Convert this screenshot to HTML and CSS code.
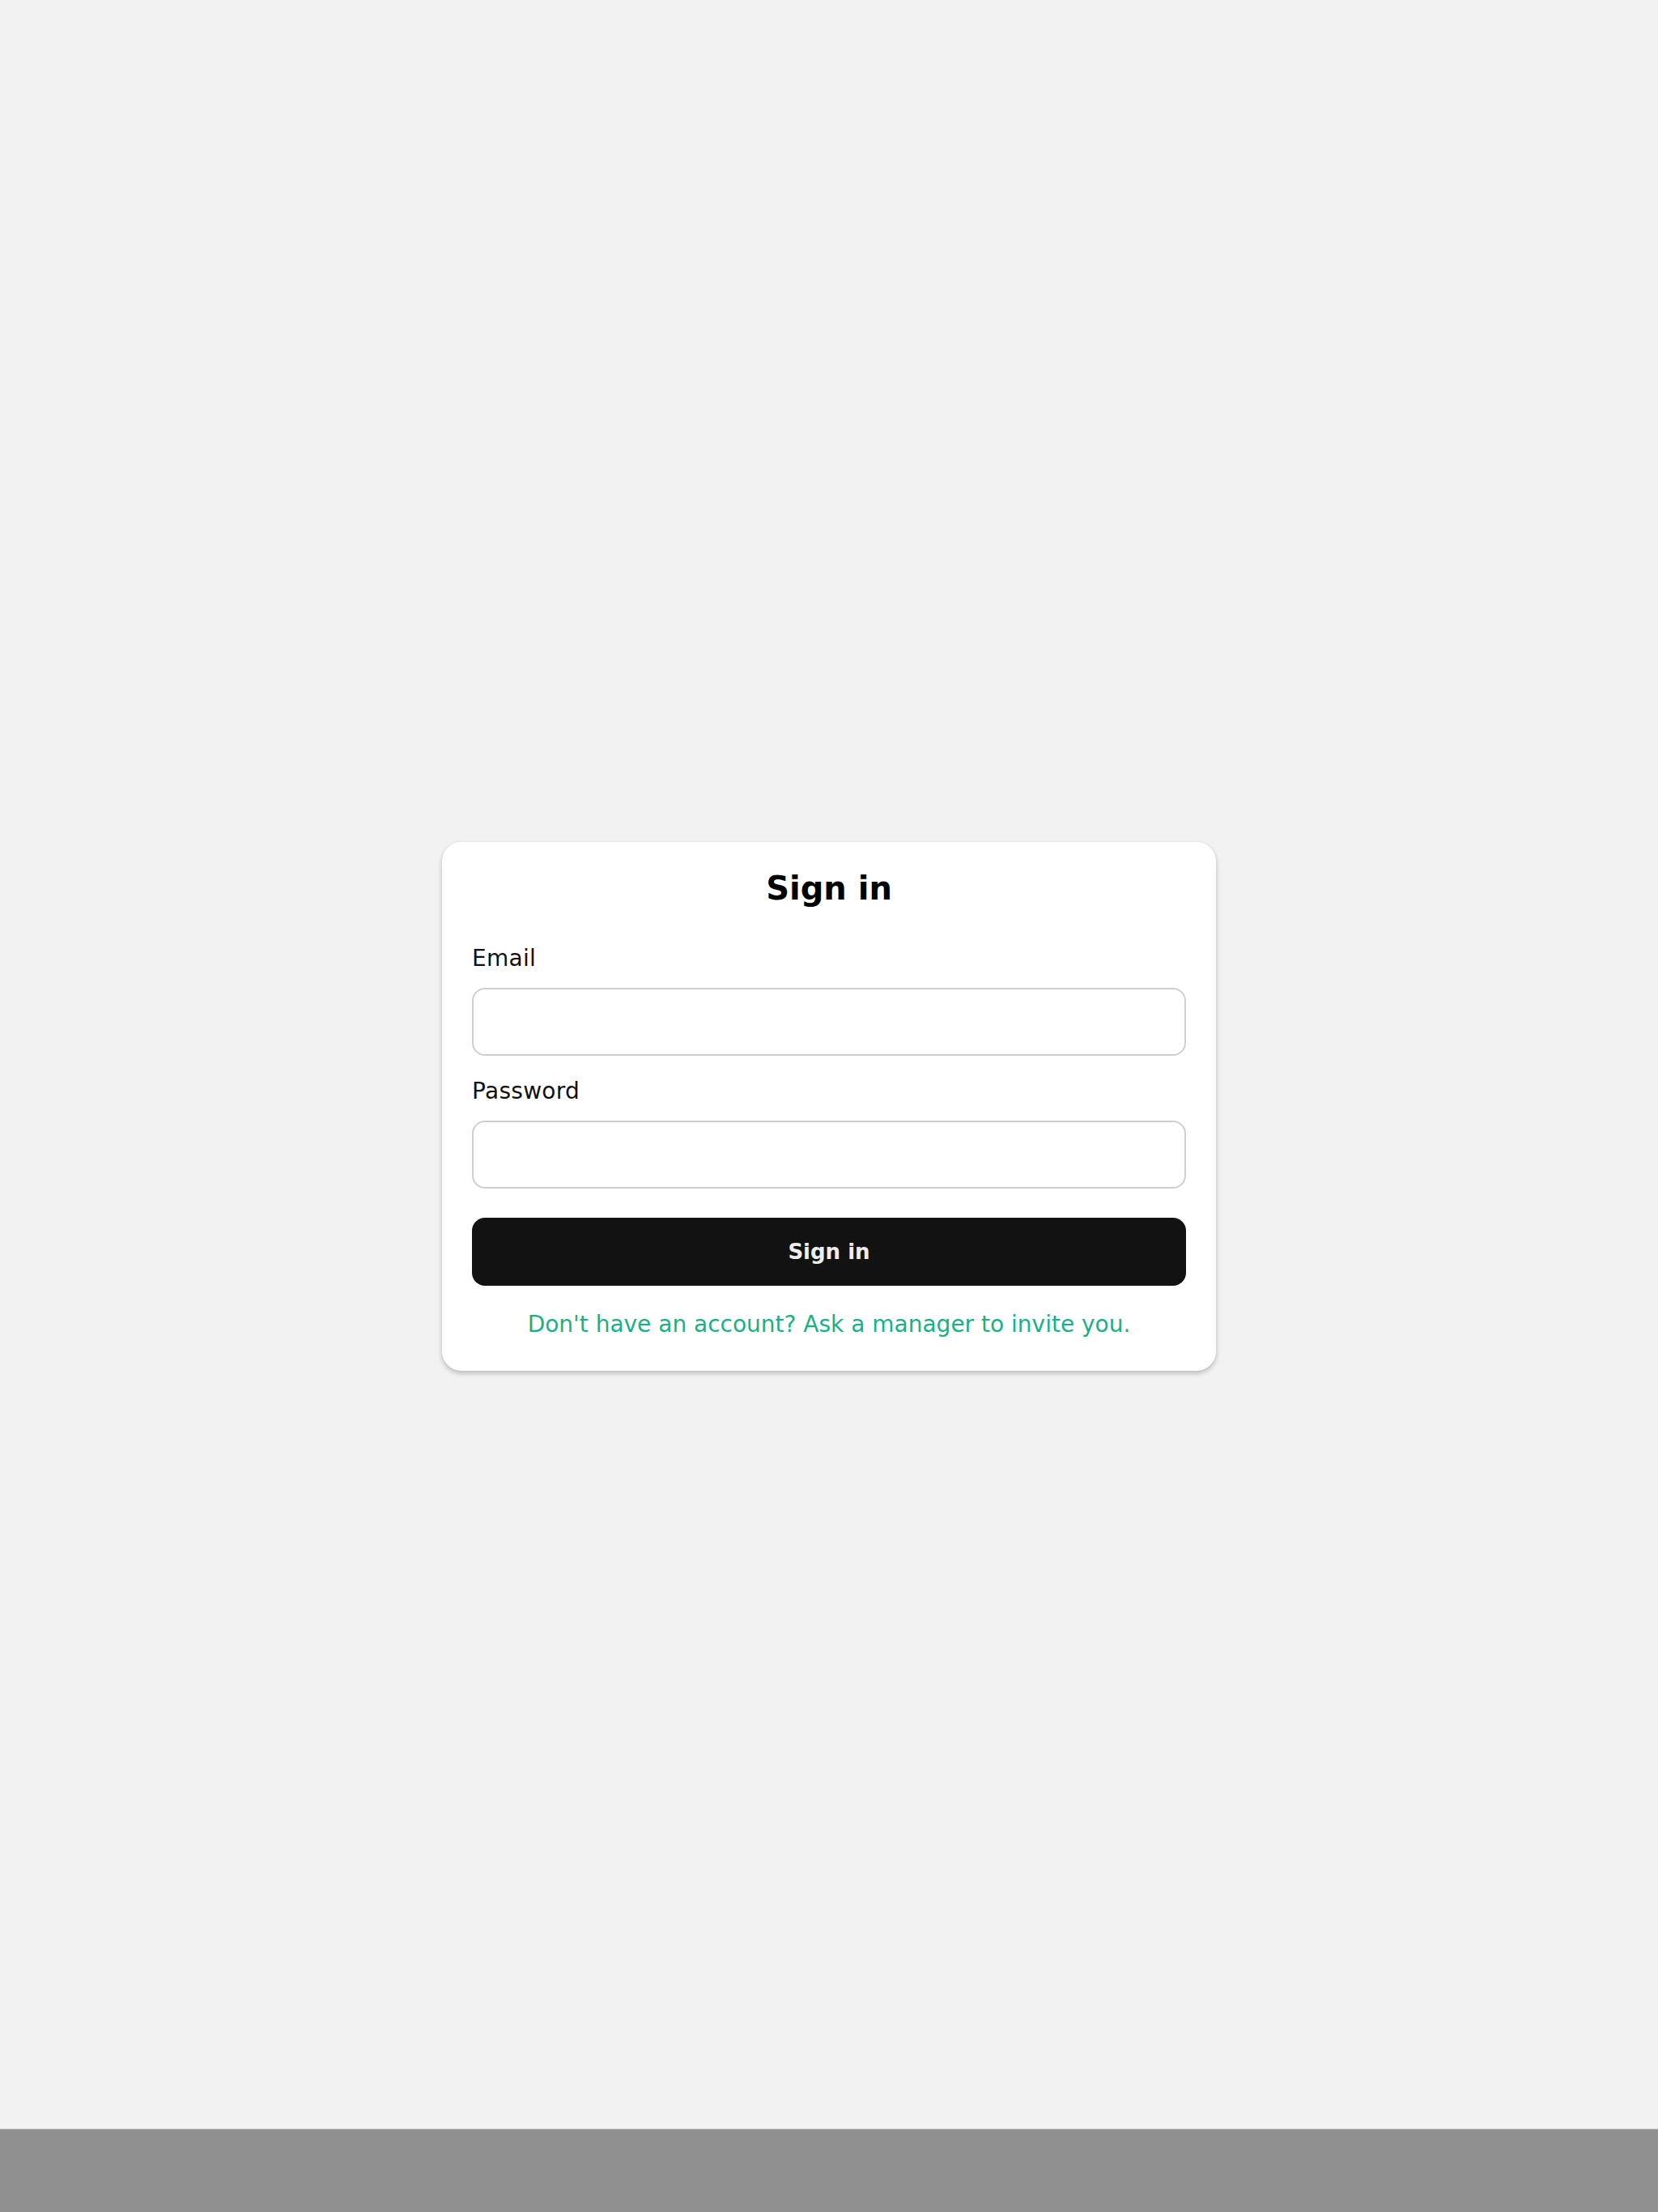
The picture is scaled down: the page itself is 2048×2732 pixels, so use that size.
FILE: index.html
```html
<!DOCTYPE html>
<html lang="en">
<head>
<meta charset="utf-8">
<title>Sign in</title>
<link rel="stylesheet" href="styles.css">
</head>
<body>
<main class="page">
  <form class="card" onsubmit="return false;">
    <h1 class="title">Sign in</h1>
    <div class="field">
      <label class="label" for="email">Email</label>
      <input class="input" id="email" type="email">
    </div>
    <div class="field">
      <label class="label" for="password">Password</label>
      <input class="input" id="password" type="password">
    </div>
    <button class="submit" type="submit">Sign in</button>
    <p class="hint">Don't have an account? Ask a manager to invite you.</p>
  </form>
</main>
<div class="bottom-bar"></div>
</body>
</html>
```

FILE: styles.css
```css
* {
  box-sizing: border-box;
}

html, body {
  margin: 0;
  padding: 0;
}

body {
  background: #f2f2f2;
  font-family: "DejaVu Sans", "Liberation Sans", sans-serif;
  color: #1a1a1a;
}

.page {
  min-height: 100vh;
  display: flex;
  align-items: center;
  justify-content: center;
}

.card {
  width: 956px;
  background: #ffffff;
  border-radius: 24px;
  box-shadow: 0 3px 6px rgba(0, 0, 0, 0.24);
  padding: 33px 37px 40px;
  display: flex;
  flex-direction: column;
}

.title {
  margin: 0 0 46px;
  font-size: 40px;
  line-height: 48px;
  font-weight: 700;
  color: #000000;
  text-align: center;
}

.field {
  display: flex;
  flex-direction: column;
  gap: 19px;
  margin-bottom: 27px;
}

.field + .field {
  margin-bottom: 36px;
}

.label {
  font-size: 28px;
  line-height: 34px;
  color: #111111;
  letter-spacing: 0.3px;
}

.input {
  display: block;
  width: 100%;
  height: 84px;
  margin: 0;
  border: 2px solid #cfcfcf;
  border-radius: 16px;
  background: #ffffff;
  font-family: inherit;
  font-size: 28px;
  padding: 0 20px;
  outline: none;
}

.submit {
  display: block;
  width: 100%;
  height: 84px;
  margin: 0 0 31px;
  border: none;
  border-radius: 16px;
  background: #121212;
  color: #ededed;
  font-family: inherit;
  font-size: 26px;
  font-weight: 700;
  line-height: 34px;
  cursor: pointer;
}

.hint {
  margin: 0;
  font-size: 28px;
  line-height: 34px;
  color: #17b283;
  text-align: center;
}

.bottom-bar {
  position: fixed;
  left: 0;
  right: 0;
  bottom: 0;
  height: 103px;
  background: #909090;
  border-top: 1px solid #c6c6c6;
}
```
